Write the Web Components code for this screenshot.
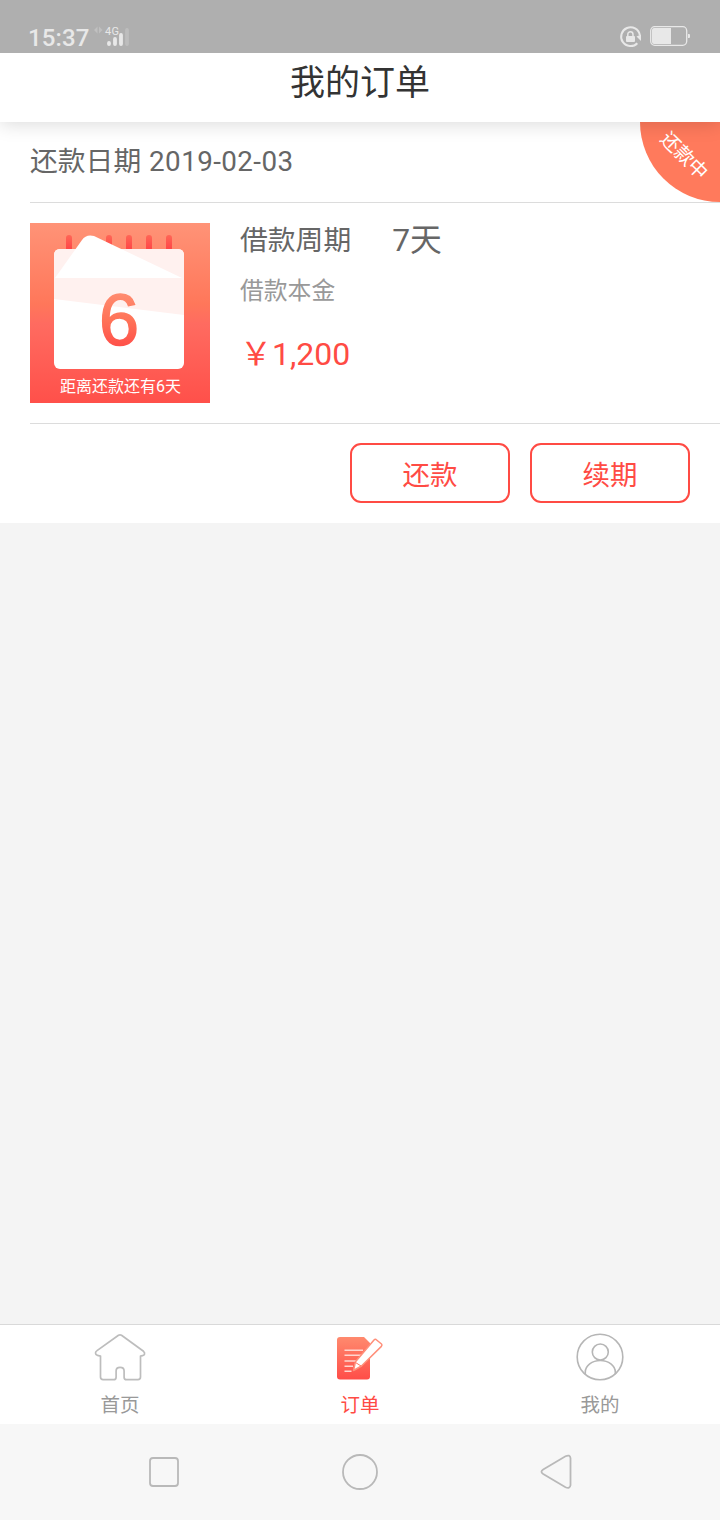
<!DOCTYPE html>
<html lang="zh-CN">
<head>
<meta charset="utf-8">
<title>我的订单</title>
<style>
html, body {
  margin: 0;
  height: 100%;
}
body {
  font-family: Roboto, "Noto Sans CJK SC", sans-serif;
  background: #f4f4f4;
  color: #666;
  --red: #ff4b44;
  --line: #dcdcdc;
}
</style>
</head>
<body>
<order-app></order-app>

<template id="status-bar">
  <style>
    :host {
      display: flex;
      box-sizing: border-box;
      height: 53px;
      padding: 22px 29px 0 28px;
      background: #afafaf;
      color: #e8e8e8;
      justify-content: space-between;
    }
    .side { display: flex; }
    .time { font-size: 24px; line-height: 32px; font-weight: 500; letter-spacing: .15px; }
    svg { display: block; }
    .signal { margin-left: 4px; }
    .right { gap: 8px; padding-top: 3px; }
  </style>
  <div class="side">
    <span class="time">15:37</span>
    <svg class="signal" width="38" height="31" viewBox="94 22 38 31">
      <path d="M94 30l3.500-3.500v7zM102.500 30l-3.500-3.500v7z" fill="#c0c0c0"/>
      <text x="105" y="35" font-size="11" textLength="14" fill="#e8e8e8">4G</text>
      <g stroke-width="3.800" stroke-linecap="round" stroke="#e8e8e8">
        <path d="M109 43v1M115 39v5M121 35v9"/>
        <path d="M127 30v14" stroke="#bdbdbd"/>
      </g>
    </svg>
  </div>
  <div class="side right">
    <svg width="23" height="23" viewBox="619 25 23 23" fill="none" stroke="#e8e8e8">
      <path d="M637.300 43.200A9.400 9.400 0 1 1 639.800 35" stroke-width="2"/>
      <path d="M636.500 36.500l4.500-2v6.500z" fill="#e8e8e8" stroke="none"/>
      <path d="M627.800 36v-1.600a2.600 2.600 0 0 1 5.200 0v1.600" stroke-width="1.500"/>
      <rect x="626" y="36" width="9" height="6" rx="1" fill="#e8e8e8" stroke="none"/>
    </svg>
    <svg width="41" height="23" viewBox="650 25 41 23">
      <rect x="650.700" y="26.700" width="36" height="18.600" rx="4" fill="none" stroke="#e8e8e8" stroke-width="1.300"/>
      <path d="M654 28h17v16h-17a2 2 0 0 1-2-2v-12a2 2 0 0 1 2-2z" fill="#e8e8e8"/>
      <path d="M688 34h1a1 1 0 0 1 1 1v2a1 1 0 0 1-1 1h-1z" fill="#e8e8e8"/>
    </svg>
  </div>
</template>

<template id="title-bar">
  <style>
    :host {
      display: block;
      position: relative;
      z-index: 1;
      height: 69px;
      background: #fff;
      box-shadow: 0 2px 18px rgba(0, 0, 0, .15);
      clip-path: inset(0 0 -22px 0);
      color: #333;
      font-size: 35px;
      line-height: 61px;
      text-align: center;
    }
  </style>
  <slot></slot>
</template>

<template id="corner-badge">
  <style>
    :host {
      position: absolute;
      top: 0;
      right: 0;
      width: 80px;
      height: 80px;
      display: grid;
      place-items: center;
      border-bottom-left-radius: 80px;
      background: #ff7a5c;
      color: #fff;
      font-size: 19.2px;
      line-height: 20px;
    }
    span { transform: translate(4px, -6px) rotate(45deg); white-space: nowrap; }
  </style>
  <span><slot></slot></span>
</template>

<template id="day-calendar">
  <style>
    :host { display: block; width: 180px; height: 180px; }
    svg { display: block; }
  </style>
  <svg width="180" height="180" viewBox="0 0 180 180">
    <defs>
      <linearGradient id="bg" x1="0" y1="0" x2="0" y2="1">
        <stop offset="0" stop-color="#ff9377"/>
        <stop offset=".45" stop-color="#ff775a"/>
        <stop offset=".56" stop-color="#ff6b60"/>
        <stop offset="1" stop-color="#ff504a"/>
      </linearGradient>
      <linearGradient id="num" gradientUnits="userSpaceOnUse" x1="0" y1="70" x2="0" y2="124">
        <stop offset="0" stop-color="#ff8c70"/>
        <stop offset=".5" stop-color="#ff7358"/>
        <stop offset="1" stop-color="#ff4f49"/>
      </linearGradient>
      <linearGradient id="ring" gradientUnits="userSpaceOnUse" x1="0" y1="12" x2="0" y2="26">
        <stop offset="0" stop-color="#ff6656"/>
        <stop offset="1" stop-color="#ff4747"/>
      </linearGradient>
    </defs>
    <path fill="url(#bg)" d="M0 0h180v180H0z"/>
    <path fill="url(#ring)" d="M36 26V15q0-3 3-3t3 3v11zM76 26V15q0-3 3-3t3 3v11zM96 26V15q0-3 3-3t3 3v11zM116 26V15q0-3 3-3t3 3v11zM136 26V15q0-3 3-3t3 3v11z"/>
    <rect x="24" y="26" width="130" height="120" rx="6" fill="#fff"/>
    <path fill="#fff1ef" d="M24 55V32q0-6 6-6h118q6 0 6 6v60L24 76z"/>
    <path fill="#fff" d="M25 55L52 17q4-6 12-4l88 42z"/>
    <text class="day" x="89" y="121.500" text-anchor="middle" font-family="Liberation Sans, sans-serif" font-size="72" fill="url(#num)" stroke="url(#num)" stroke-width="1.500"></text>
    <text class="note" x="90.500" y="169" text-anchor="middle" font-size="16" fill="#fff"></text>
  </svg>
</template>

<template id="line-button">
  <style>
    :host {
      display: block;
      box-sizing: border-box;
      width: 160px;
      height: 60px;
      padding-top: 3px;
      border: 2px solid var(--red);
      border-radius: 11px;
      color: var(--red);
      font-size: 27.5px;
      line-height: 56px;
      text-align: center;
    }
  </style>
  <slot></slot>
</template>

<template id="order-card">
  <style>
    :host { display: block; position: relative; height: 401px; background: #fff; }
    .date {
      height: 80px;
      margin-left: 30px;
      border-bottom: 1px solid var(--line);
      font-size: 27.8px;
      line-height: 80px;
    }
    .body {
      display: flex;
      gap: 30px;
      margin-left: 30px;
      padding: 20px 0;
      border-bottom: 1px solid var(--line);
    }
    .term { display: flex; gap: 41px; height: 36px; line-height: 36px; font-size: 27.8px; }
    .term b { font-weight: normal; font-size: 31.8px; line-height: 34px; }
    .label { margin-top: 14px; color: #999; font-size: 23.8px; line-height: 36px; }
    .money { margin-top: 23px; color: var(--red); font-size: 32px; line-height: 44px; }
    .actions { display: flex; justify-content: flex-end; gap: 20px; padding: 19px 30px 0 0; }
  </style>
  <corner-badge><slot name="state"></slot></corner-badge>
  <div class="date"><slot name="date"></slot></div>
  <div class="body">
    <slot name="picture"></slot>
    <div>
      <div class="term"><span>借款周期</span><b><slot name="term"></slot></b></div>
      <div class="label">借款本金</div>
      <div class="money"><slot name="money"></slot></div>
    </div>
  </div>
  <div class="actions"><slot name="action"></slot></div>
</template>

<template id="tab-item">
  <style>
    :host {
      flex: 1;
      display: flex;
      flex-direction: column;
      align-items: center;
      color: #999;
      font-size: 19.5px;
      line-height: 28px;
    }
    :host([active]) { color: var(--red); }
    .icon { height: 52px; margin: 6px 0 9px; }
  </style>
  <div class="icon"><slot name="icon"></slot></div>
  <span><slot></slot></span>
</template>

<template id="tab-bar">
  <style>
    :host {
      display: flex;
      height: 99px;
      border-top: 1px solid #d9d9d9;
      background: #fff;
    }
  </style>
  <slot></slot>
</template>

<template id="system-nav">
  <style>
    :host {
      display: flex;
      height: 96px;
      padding: 0 144px;
      align-items: center;
      justify-content: space-between;
      background: #f7f7f7;
    }
    svg { display: block; fill: none; stroke: #b9b9b9; stroke-width: 1.800; }
  </style>
  <svg width="40" height="40"><rect x="6" y="6" width="28" height="28" rx="3"/></svg>
  <svg width="40" height="40"><circle cx="20" cy="20" r="17"/></svg>
  <svg width="40" height="40"><path d="M7.200 17.400L29.500 4.200q4.500-2 5 2v27q-.5 4-5 2L7.200 22q-3.500-2.300 0-4.600z"/></svg>
</template>

<template id="order-app">
  <style>
    :host { display: flex; flex-direction: column; height: 100vh; overflow: hidden; }
    main { flex: 1; }
    svg { display: block; }
    .day { margin-left: 1px; letter-spacing: .4px; }
  </style>
  <status-bar></status-bar>
  <title-bar>我的订单</title-bar>
  <main>
    <order-card>
      <span slot="state">还款中</span>
      <span slot="date">还款日期 <span class="day">2019-02-03</span></span>
      <day-calendar slot="picture" day="6" note="距离还款还有6天"></day-calendar>
      <span slot="term">7天</span>
      <span slot="money">￥1,200</span>
      <line-button slot="action">还款</line-button>
      <line-button slot="action">续期</line-button>
    </order-card>
  </main>
  <tab-bar>
    <tab-item>
      <svg slot="icon" width="52" height="52" viewBox="94 1331 52 52" fill="none" stroke="#bdbdbd" stroke-width="1.700" stroke-linejoin="round">
        <path d="M118.500 1335.300q1.500-1 3 0l22 16q1.500 1.300 1 3-.3 1-2 1.300l-2 .5v21q0 2.600-2.600 2.600h-11.300q-2.500 0-2.500-2.500v-6.300q0-3.500-4-3.500t-4 3.500v6.300q0 2.500-2.500 2.500h-10.500q-2.600 0-2.600-2.600v-21l-3-.7q-2-.5-2-2.500 0-1.300 1.500-2.300z"/>
      </svg>
      首页
    </tab-item>
    <tab-item active>
      <svg slot="icon" width="52" height="52" viewBox="334 1331 52 52">
        <defs>
          <linearGradient id="page" x1="0" y1="0" x2="0" y2="1">
            <stop offset="0" stop-color="#ff8a6e"/>
            <stop offset="1" stop-color="#ff4d48"/>
          </linearGradient>
        </defs>
        <path fill="url(#page)" d="M340 1337h24l6 6v33.500q0 3-3 3h-27q-3 0-3-3v-36.500q0-3 3-3z"/>
        <path stroke="#ffd6cf" stroke-width="1.600" d="M344.500 1350.300H363M344.500 1355.300H361M344.500 1361H357M344.500 1366.300h8.500M344.500 1371.300h7"/>
        <path fill="#fff" stroke="#ff8f7a" stroke-width="1.500" stroke-linejoin="round" d="M376 1339.500l5.500 4.500q1 1-.1 2.400L361.500 1366l-8 4.500 2-8.800 18.500-21.700q1-1 2-.5z"/>
        <path fill="none" stroke="#ff765f" stroke-width="1" d="M355.500 1362.500l5.500 3.500"/>
      </svg>
      订单
    </tab-item>
    <tab-item>
      <svg slot="icon" width="52" height="52" viewBox="574 1331 52 52" fill="none" stroke="#b6b6b6" stroke-width="1.600">
        <circle cx="600" cy="1357" r="22.800"/>
        <circle cx="600.300" cy="1352" r="8"/>
        <path d="M585.300 1374.300v-2.300a15 11.500 0 0 1 30 0v2.300"/>
      </svg>
      我的
    </tab-item>
  </tab-bar>
  <system-nav></system-nav>
</template>

<script>
class BaseElement extends HTMLElement {
  constructor() {
    super();
    this.attachShadow({ mode: "open" });
    const template = document.getElementById(this.localName);
    this.shadowRoot.appendChild(template.content.cloneNode(true));
  }
}

class DayCalendar extends BaseElement {
  connectedCallback() {
    this.shadowRoot.querySelector(".day").textContent = this.getAttribute("day");
    this.shadowRoot.querySelector(".note").textContent = this.getAttribute("note");
  }
}

customElements.define("status-bar", class extends BaseElement {});
customElements.define("title-bar", class extends BaseElement {});
customElements.define("corner-badge", class extends BaseElement {});
customElements.define("day-calendar", DayCalendar);
customElements.define("line-button", class extends BaseElement {});
customElements.define("order-card", class extends BaseElement {});
customElements.define("tab-item", class extends BaseElement {});
customElements.define("tab-bar", class extends BaseElement {});
customElements.define("system-nav", class extends BaseElement {});
customElements.define("order-app", class extends BaseElement {});
</script>
</body>
</html>
